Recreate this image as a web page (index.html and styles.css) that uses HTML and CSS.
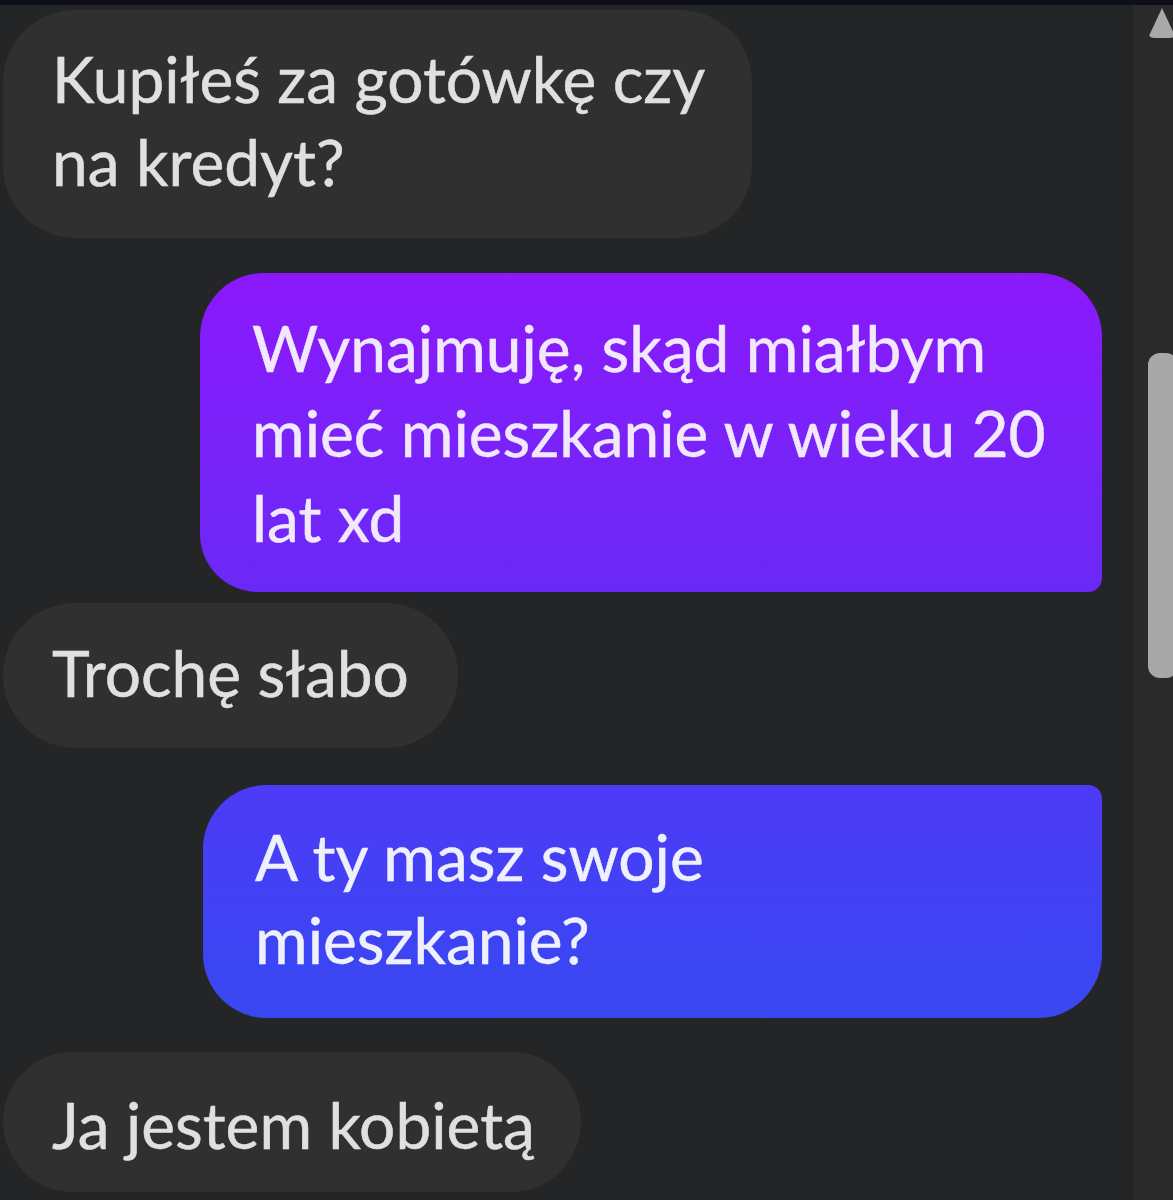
FILE: index.html
```html
<!DOCTYPE html>
<html lang="pl">
<head>
<meta charset="utf-8">
<title>Czat</title>
<link rel="stylesheet" href="styles.css">
</head>
<body>
<div class="topbar"></div>
<div class="app">
  <main class="thread">
    <div class="msg in b1"><p>Kupiłeś za gotówkę czy<br>na kredyt?</p></div>
    <div class="msg out purple b2"><p>Wynajmuję, skąd miałbym<br>mieć mieszkanie w wieku 20<br>lat xd</p></div>
    <div class="msg in b3"><p>Trochę słabo</p></div>
    <div class="msg out blue b4"><p>A ty masz swoje<br>mieszkanie?</p></div>
    <div class="msg in b5"><p>Ja jestem kobietą</p></div>
  </main>
  <aside class="scrollbar">
    <div class="arrow-up"></div>
    <div class="thumb"></div>
  </aside>
</div>
</body>
</html>
```
FILE: styles.css
```css
html, body {
  margin: 0;
  padding: 0;
  background: #242526;
  height: 1200px;
  overflow: hidden;
}
.topbar {
  height: 5px;
  background: #0d1117;
}
.app {
  display: flex;
  height: 1195px;
}
.thread {
  flex: 1;
  display: flex;
  flex-direction: column;
  padding: 5px 0 0 3px;
  font-family: "Lato", "Open Sans", sans-serif;
  font-size: 64px;
  color: #e0e0e2;
  -webkit-text-stroke: 0.5px currentColor;
}
.msg p {
  margin: 0;
  line-height: 83px;
  white-space: nowrap;
}
.msg {
  box-sizing: border-box;
}
.in {
  background: #303030;
  border-radius: 72px;
  padding: 32px 40px 32px 49px;
  align-self: flex-start;
}
.out {
  color: #f2e8fc;
  padding: 32px 40px 32px 52px;
  margin-left: 197px;
}
.purple {
  background: linear-gradient(180deg, #8b18fb 0%, #7a22f9 50%, #6a29f7 100%);
  border-radius: 64px 64px 14px 58px;
}
.blue {
  background: linear-gradient(180deg, #4d3af6 0%, #3f43f4 60%, #3848f1 100%);
  border-radius: 64px 14px 64px 64px;
  color: #eef0fb;
}
.b1 { width: 749px; height: 228px; padding-top: 27px; }
.b2 { width: 902px; height: 319px; margin-top: 35px; }
.b2 p { line-height: 85px; }
.b3 { width: 455px; height: 145px; margin-top: 11px; padding-top: 29px; }
.b4 { width: 899px; height: 233px; margin-top: 37px; margin-left: 200px; padding-top: 30px; }
.b5 { width: 578px; height: 140px; margin-top: 34px; padding-top: 32px; }
.b3 p, .b5 p { line-height: 81px; }
.scrollbar {
  width: 40px;
  background: #2a2a2b;
  position: relative;
}
.arrow-up {
  position: absolute;
  left: 15px;
  top: 3px;
  width: 0;
  height: 0;
  border-left: 14px solid transparent;
  border-right: 14px solid transparent;
  border-bottom: 30px solid #a9a9a9;
  border-radius: 6px;
}
.thumb {
  position: absolute;
  left: 15px;
  top: 348px;
  width: 30px;
  height: 325px;
  background: #a8a8a8;
  border-radius: 12px;
}
```
